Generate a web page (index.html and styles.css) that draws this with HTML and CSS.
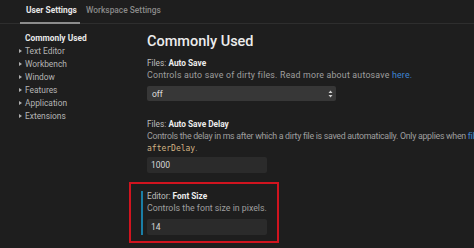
FILE: index.html
```html
<!DOCTYPE html>
<html>
<head>
<meta charset="utf-8">
<link rel="stylesheet" href="styles.css">
</head>
<body>
<div class="app">
  <div class="tabs">
    <div class="tab active">User Settings</div>
    <div class="tab">Workspace Settings</div>
  </div>
  <div class="body">
    <nav class="toc">
      <div class="toc-item current">Commonly Used</div>
      <div class="toc-item group">Text Editor</div>
      <div class="toc-item group">Workbench</div>
      <div class="toc-item group">Window</div>
      <div class="toc-item group">Features</div>
      <div class="toc-item group">Application</div>
      <div class="toc-item group">Extensions</div>
    </nav>
    <main class="settings">
      <h1 class="heading">Commonly Used</h1>
      <section class="setting">
        <div class="title"><span class="cat">Files: </span><b>Auto Save</b></div>
        <div class="desc wide">Controls auto save of dirty files. Read more about autosave <span class="link">here.</span></div>
        <div class="select"><span>off</span>
          <svg class="updown" width="5" height="8" viewBox="0 0 5 8"><path d="M2.5 0.5 L4.5 3 L0.5 3 Z M0.5 5 L4.5 5 L2.5 7.5 Z" fill="#d0d0d0"/></svg>
        </div>
      </section>
      <section class="setting second">
        <div class="title"><span class="cat">Files: </span><b>Auto Save Delay</b></div>
        <div class="desc"><div class="nowrap tight">Controls the delay in ms after which a dirty file is saved automatically. Only applies when <span class="link">files.autoSave</span> is set to</div><div><code class="code">afterDelay</code>.</div></div>
        <div class="input">1000</div>
      </section>
      <div class="highlight">
        <section class="setting focused">
          <div class="title"><span class="cat">Editor: </span><b>Font Size</b></div>
          <div class="desc">Controls the font size in pixels.</div>
          <div class="input">14</div>
        </section>
      </div>
    </main>
  </div>
</div>
</body>
</html>
```
FILE: styles.css
```css
* { box-sizing: border-box; }
html, body {
  margin: 0;
  padding: 0;
  background: #1e1e1e;
  width: 474px;
  height: 248px;
  overflow: hidden;
}
body {
  font-family: Roboto, Inter, sans-serif;
  color: #cccccc;
  font-size: 8.5px;
}
.app { width: 474px; height: 248px; }
.tabs {
  display: flex;
  height: 24px;
  padding-left: 20px;
  border-bottom: 1px solid #2e2e2e;
  align-items: flex-end;
}
.tab {
  padding: 0 6px;
  height: 23px;
  line-height: 21px;
  font-size: 8.4px;
  color: #8a8a8a;
  font-weight: 500;
}
.tab.active {
  color: #e6e6e6;
  font-weight: 700;
  border-bottom: 2px solid #8c8c8c;
  margin-bottom: -1px;
  height: 24px;
  width: 60px;
  white-space: nowrap;
}
.body { display: flex; }
.toc {
  width: 147px;
  flex: none;
  padding-top: 8px;
  padding-left: 19px;
}
.toc-item {
  height: 13px;
  line-height: 13px;
  font-size: 8.4px;
  color: #b5b5b5;
  display: flex;
  align-items: center;
  padding-left: 6px;
  position: relative;
}
.toc-item.current {
  color: #e8e8e8;
  font-weight: 700;
}
.toc-item.group::before {
  content: "";
  position: absolute;
  left: 0;
  top: 4px;
  border-left: 3px solid #b0b0b0;
  border-top: 2.5px solid transparent;
  border-bottom: 2.5px solid transparent;
}
.settings {
  flex: 1;
  min-width: 0;
  padding-top: 9px;
}
.heading {
  margin: 0 0 6px;
  font-size: 14.5px;
  line-height: 18px;
  font-weight: 500;
  color: #ececec;
}
.setting .title {
  line-height: 12px;
  font-size: 8.3px;
  color: #bdbdbd;
}
.setting .title b { color: #ececec; font-weight: 700; }
.setting .desc {
  line-height: 12px;
  font-size: 8.8px;
  color: #9e9e9e;
}
.wide { letter-spacing: 0.2px; }
.tight { letter-spacing: -0.28px; }
.nowrap { white-space: nowrap; }
.link { color: #3f86d4; }
.code {
  font-family: "DejaVu Sans Mono", monospace;
  font-size: 8px;
  color: #d2b384;
}
.select {
  margin-top: 5px;
  width: 189px;
  height: 15px;
  background: #373737;
  border-radius: 2px;
  display: flex;
  align-items: center;
  justify-content: space-between;
  padding: 0 3px 0 5px;
  color: #dedede;
  font-size: 8.5px;
}
.updown { display: block; }
.second { margin-top: 17px; }
.input {
  margin-top: 2px;
  width: 120px;
  height: 16px;
  background: #2b2b2b;
  border-radius: 2px;
  padding-left: 4px;
  line-height: 16px;
  color: #d8d8d8;
  font-size: 8.5px;
}
.highlight {
  margin-top: 9px;
  margin-left: -18px;
  width: 150px;
  border: 2px solid #d1141f;
  padding: 7px 0 6px 10px;
}
.focused {
  border-left: 2px solid #1a7ea6;
  padding-left: 4px;
}
.focused .title { line-height: 11px; }
.focused .input { margin-top: 5px; }
```
